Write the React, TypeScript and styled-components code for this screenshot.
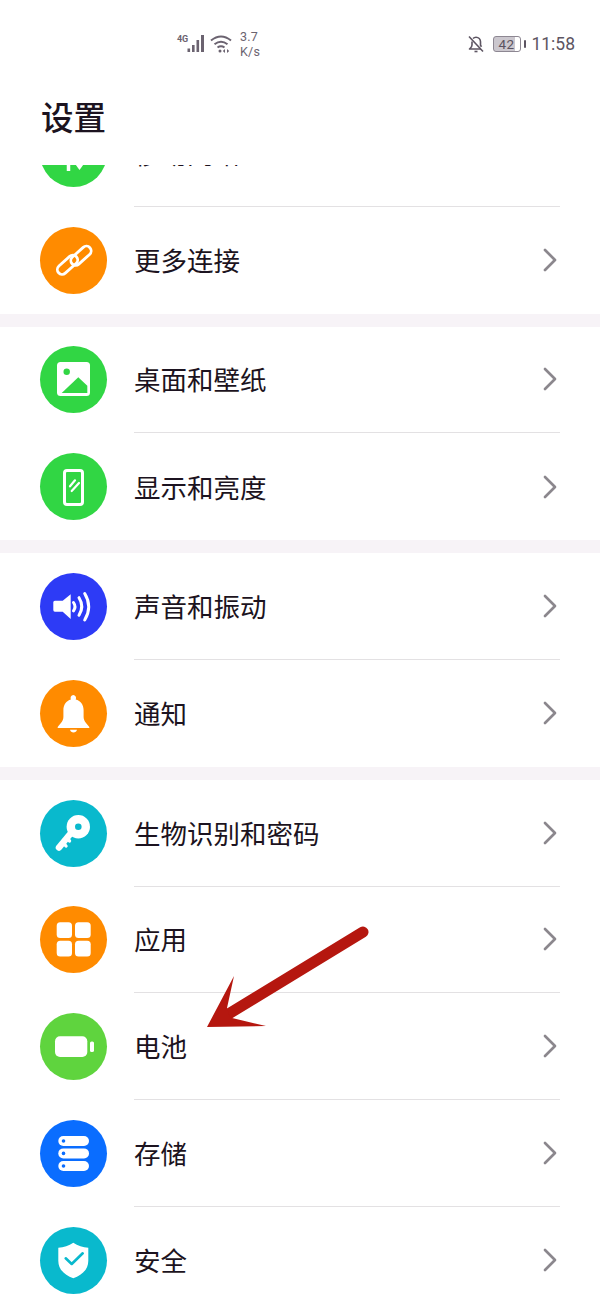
import React from 'react';
import styled, { createGlobalStyle } from 'styled-components';

const GlobalStyle = createGlobalStyle`
  html, body {
    margin: 0;
    padding: 0;
    background: #fff;
    overflow: hidden;
  }
  * { box-sizing: border-box; }
`

const Page = styled.div`
  position: relative;
  width: 600px;
  height: 1300px;
  overflow: hidden;
  background: #fff;
  font-family: "Noto Sans CJK SC", "Noto Sans", sans-serif;
  color: #1c1320;
`

const Header = styled.header`
  height: 165px;
  background: #fff;
`

const StatusBar = styled.div`
  height: 86px;
  padding: 0 25px 0 177px;
  display: flex;
  align-items: flex-start;
  justify-content: space-between;
  color: #6b6370;
  font-family: "Roboto", "Liberation Sans", sans-serif;
`

const StatusGroup = styled.div<{ $top: number }>`
  display: flex;
  align-items: center;
  padding-top: ${p => p.$top}px;
`

const SignalWrap = styled.div`
  position: relative;
  width: 29px;
  height: 24px;
  margin-right: 4px;
`

const NetLabel = styled.span`
  position: absolute;
  left: 0;
  top: 3px;
  font-size: 9px;
  line-height: 9px;
  font-weight: 700;
  letter-spacing: -0.2px;
`

const Speed = styled.div`
  margin-left: 8px;
  font-size: 12.5px;
  line-height: 15px;
  letter-spacing: 0.2px;
`

const Battery = styled.div`
  position: relative;
  width: 28px;
  height: 16px;
  margin: 0 10px 0 8px;
  padding-right: 2px;
  border: 1px solid #8d8792;
  border-radius: 3px;
  background: linear-gradient(90deg, #cbc7ce 82%, #fff 82%);
  font-size: 13.5px;
  line-height: 14px;
  text-align: center;
  letter-spacing: 0.3px;
  color: #5a5260;

  &::after {
    content: '';
    position: absolute;
    right: -6px;
    top: 3px;
    width: 2.5px;
    height: 8px;
    background: #5d5562;
    border-radius: 1px;
  }
`

const Clock = styled.span`
  font-size: 17.5px;
  line-height: 22px;
  color: #5d5562;
`

const Title = styled.h1`
  margin: 0;
  padding: 0 0 0 41px;
  font-size: 32.5px;
  line-height: 60px;
  font-weight: 500;
`

const Scroller = styled.main`
  height: 1135px;
  overflow: hidden;
`

const List = styled.div`
  margin-top: -65px;
`

const Group = styled.section`
  background: #fff;
  & + & {
    border-top: 13px solid #f7f3f7;
  }
`

const Row = styled.div`
  height: 106.8px;
  padding: 0 40px;
  display: flex;
  align-items: center;
  gap: 27px;
`

const Badge = styled.svg<{ $bg: string }>`
  flex: none;
  width: 67px;
  height: 67px;
  border-radius: 50%;
  background: ${p => p.$bg};
`

const Body = styled.div<{ $last: boolean }>`
  flex: 1;
  align-self: stretch;
  display: flex;
  align-items: center;
  justify-content: space-between;
  padding-right: 3px;
  border-bottom: ${p => (p.$last ? 'none' : '1.5px solid #e3e1e3')};
`

const Label = styled.span`
  font-size: 26.5px;
  line-height: 36px;
  font-weight: 400;
`

const Chevron = styled.svg`
  flex: none;
  width: 14px;
  height: 24px;
  fill: none;
  stroke: #8b878d;
  stroke-width: 2.7;
  stroke-linecap: round;
  stroke-linejoin: round;
`

const ArrowMark = styled.svg`
  position: absolute;
  left: 190px;
  top: 910px;
  width: 200px;
  height: 130px;
`

const NetworkGlyph = () => (
  <g>
    <path d="M28.500 18v33" stroke="#fff" strokeWidth="3.500" />
    <path d="M39.500 16v28" stroke="#fff" strokeWidth="3.500" />
    <path d="M33 41l6.500 9L46 41z" fill="#fff" />
  </g>
)

const LinkGlyph = () => (
  <g fill="none" stroke="#fff" strokeWidth="2.800">
    <rect x="15.500" y="33" width="24" height="9.500" rx="4.750" transform="rotate(-42 27.500 37.750)" />
    <rect x="29" y="24" width="24" height="9.500" rx="4.750" transform="rotate(-42 41 28.750)" />
  </g>
)

const ImageGlyph = ({ bg }: { bg: string }) => (
  <g>
    <rect x="17" y="16" width="33" height="34" rx="3.500" fill="#fff" />
    <path d="M21.700 47L38.300 31.300l9 8.400V47z" fill={bg} />
    <circle cx="26.700" cy="25.700" r="3.200" fill={bg} />
  </g>
)

const PhoneGlyph = () => (
  <g fill="none" stroke="#fff">
    <rect x="24.500" y="17.500" width="18" height="34" rx="2.500" strokeWidth="3" />
    <path d="M30 33.300l5-6M31.700 38l7.300-8" strokeWidth="2.200" strokeLinecap="round" />
  </g>
)

const SoundGlyph = () => (
  <g>
    <path d="M13.300 29.300a1.600 1.600 0 0 1 1.600-1.600h7.800l8-6.400V46l-8-7.300h-7.800a1.600 1.600 0 0 1-1.600-1.600z" fill="#fff" />
    <path d="M33.500 29.500q3 4.200 0 8.400M39 24.700q5.600 8.800 0 17.600M44.700 20.500q8 13.200 0 26.500" fill="none" stroke="#fff" strokeWidth="3" strokeLinecap="round" />
  </g>
)

const BellGlyph = () => (
  <g fill="#fff">
    <path d="M33.300 15a3 3 0 0 1 2.400 4.400c5 1.300 7.900 5.300 7.900 10.600v6.700c0 4 2.400 6.400 5.700 10.200v1.100H17.700v-1.100c3.300-3.800 5.700-6.200 5.700-10.200V30c0-5.300 2.900-9.300 7.500-10.600a3 3 0 0 1 2.400-4.400z" />
    <path d="M30 49.800h7c-.4 1.800-1.800 2.700-3.500 2.700s-3.100-.9-3.500-2.700z" />
  </g>
)

const KeyGlyph = ({ bg }: { bg: string }) => (
  <g>
    <circle cx="38.300" cy="26.700" r="11.700" fill="#fff" />
    <circle cx="38.300" cy="26.700" r="3.300" fill={bg} />
    <path d="M31 33L19 47.500" stroke="#fff" strokeWidth="6.500" strokeLinecap="round" />
    <path d="M22.500 42l3.500 4M26.500 37.500l3 3.400" stroke="#fff" strokeWidth="3.400" strokeLinecap="round" />
  </g>
)

const AppsGlyph = () => (
  <g fill="#fff">
    <rect x="16.700" y="16.300" width="15.300" height="15.700" rx="3.500" />
    <rect x="35" y="16.300" width="15.700" height="15.700" rx="3.500" />
    <rect x="16.700" y="34.700" width="15.300" height="15.700" rx="3.500" />
    <rect x="35" y="34.700" width="15.700" height="15.700" rx="3.500" />
  </g>
)

const BatteryGlyph = () => (
  <g fill="#fff">
    <rect x="15" y="23.300" width="32.300" height="20.700" rx="5" />
    <rect x="50" y="28.400" width="4" height="10.600" rx="1.600" />
  </g>
)

const StorageGlyph = ({ bg }: { bg: string }) => (
  <g>
    {[16, 28.4, 41].map(y => (
      <g key={y}>
        <rect x="18.300" y={y} width="30.700" height="10" rx="5" fill="#fff" />
        <circle cx="23.500" cy={y + 5} r="1.800" fill={bg} />
      </g>
    ))}
  </g>
)

const ShieldGlyph = ({ bg }: { bg: string }) => (
  <g>
    <path d="M33.300 15.700c4.500 3 9.500 4.600 15 5v13c0 8.500-6 14.300-15 17.600-9-3.300-15-9.100-15-17.600v-13c5.500-.4 10.500-2 15-5z" fill="#fff" />
    <path d="M25.700 31.300l6 5.700 11-10.700" fill="none" stroke={bg} strokeWidth="2.600" strokeLinecap="round" strokeLinejoin="round" />
  </g>
)

const GREEN = '#31d644'
const ORANGE = '#ff8b00'
const CYAN = '#09b9cd'

type GlyphProps = { bg: string }
type RowData = { label: string; bg: string; glyph: React.ComponentType<GlyphProps> }

const groups: RowData[][] = [
  [
    { label: '移动网络', bg: GREEN, glyph: NetworkGlyph },
    { label: '更多连接', bg: ORANGE, glyph: LinkGlyph },
  ],
  [
    { label: '桌面和壁纸', bg: GREEN, glyph: ImageGlyph },
    { label: '显示和亮度', bg: GREEN, glyph: PhoneGlyph },
  ],
  [
    { label: '声音和振动', bg: '#2d3bf6', glyph: SoundGlyph },
    { label: '通知', bg: ORANGE, glyph: BellGlyph },
  ],
  [
    { label: '生物识别和密码', bg: CYAN, glyph: KeyGlyph },
    { label: '应用', bg: ORANGE, glyph: AppsGlyph },
    { label: '电池', bg: '#5fd43e', glyph: BatteryGlyph },
    { label: '存储', bg: '#0a6dff', glyph: StorageGlyph },
    { label: '安全', bg: CYAN, glyph: ShieldGlyph },
  ],
]

function App() {
  return (
    <Page>
      <GlobalStyle />
      <Header>
        <StatusBar>
          <StatusGroup $top={29}>
            <SignalWrap>
              <NetLabel>4G</NetLabel>
              <svg width="29" height="24" viewBox="0 0 29 24" fill="#6b6370">
                <rect x="10.500" y="16.500" width="2.600" height="3.500" />
                <rect x="15" y="13" width="2.600" height="7" />
                <rect x="19.500" y="8" width="2.600" height="12" />
                <rect x="24" y="3" width="3" height="17" />
              </svg>
            </SignalWrap>
            <svg width="22" height="20" viewBox="0 0 22 20" fill="none" stroke="#6b6370" strokeWidth="2">
              <path d="M1 6.500q10-8 20 0M4.500 10.200q6.500-5 13 0M7.500 13.500q3.500-2.500 7 0" />
              <circle cx="10" cy="17" r="1.500" fill="#6b6370" stroke="none" />
              <path d="M15 15l-2.200 2 2.200 2zM17 15l2.200 2-2.200 2z" fill="#6b6370" stroke="none" />
            </svg>
            <Speed>
              3.7
              <br />
              K/s
            </Speed>
          </StatusGroup>
          <StatusGroup $top={33}>
            <svg width="18" height="18" viewBox="0 0 18 18" fill="none" stroke="#5d5562" strokeWidth="1.600" strokeLinejoin="round">
              <path d="M5 6.500V10c0 2-1.500 3-2.500 4h11.500M6 3.500C7 2.500 8 2.200 9 2.200c2.600 0 4.500 2 4.500 4.600v3.500l1 1.500" />
              <path d="M7.500 16.500h3" />
              <path d="M2 1.500l14 15" />
            </svg>
            <Battery>42</Battery>
            <Clock>11:58</Clock>
          </StatusGroup>
        </StatusBar>
        <Title>设置</Title>
      </Header>
      <Scroller>
        <List>
          {groups.map((rows, g) => (
            <Group key={g}>
              {rows.map((row, i) => {
                const Glyph = row.glyph
                return (
                  <Row key={row.label}>
                    <Badge $bg={row.bg} viewBox="0 0 67 67">
                      <Glyph bg={row.bg} />
                    </Badge>
                    <Body $last={i === rows.length - 1}>
                      <Label>{row.label}</Label>
                      <Chevron viewBox="0 0 14 24">
                        <path d="M2 2l10 10L2 22" />
                      </Chevron>
                    </Body>
                  </Row>
                )
              })}
            </Group>
          ))}
        </List>
      </Scroller>
      <ArrowMark viewBox="0 0 200 130">
        <path d="M173 22L32 108" stroke="#b5170f" strokeWidth="11" strokeLinecap="round" />
        <path d="M44 66L17 117l59-1-36-8.500-3-9.500z" fill="#b5170f" />
      </ArrowMark>
    </Page>
  );
}

export default App;
